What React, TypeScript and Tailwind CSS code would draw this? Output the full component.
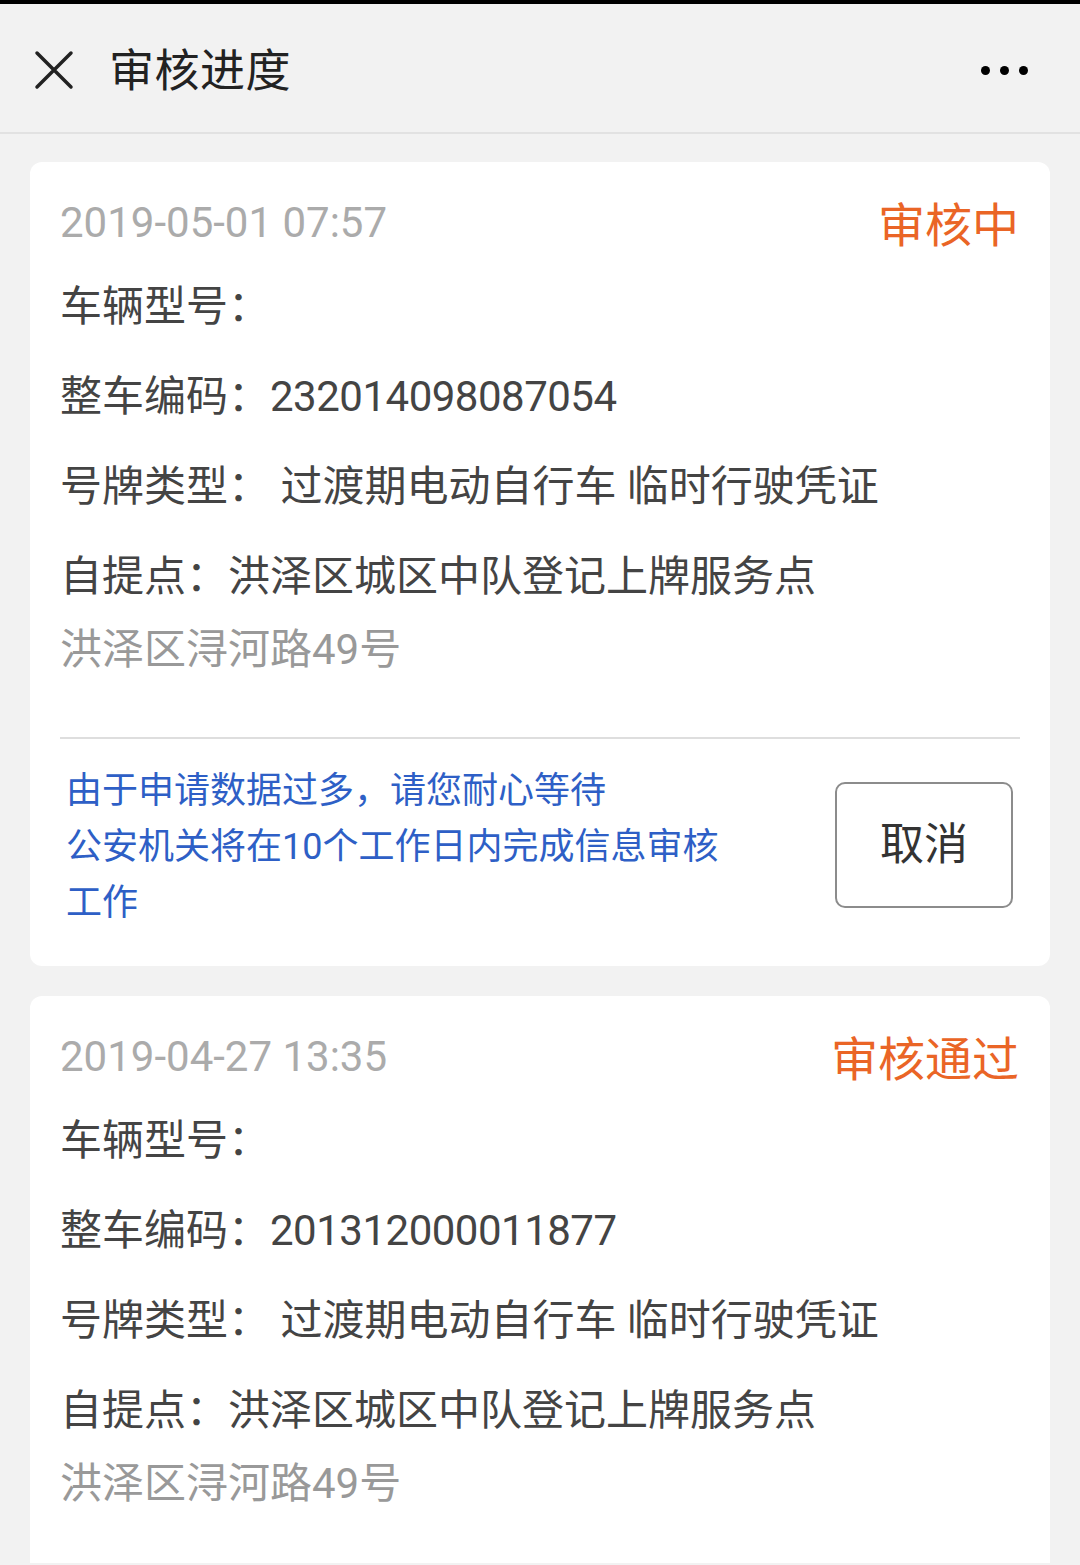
import React from 'react'

type Record = {
    time: string;
    status: string;
    model: string;
    code: string;
    plateType: string;
    pickup: string;
    address: string;
    pending: boolean;
}

const records: Record[] = [
    {
        time: "2019-05-01 07:57",
        status: "审核中",
        model: "",
        code: "232014098087054",
        plateType: "过渡期电动自行车 临时行驶凭证",
        pickup: "洪泽区城区中队登记上牌服务点",
        address: "洪泽区浔河路49号",
        pending: true,
    },
    {
        time: "2019-04-27 13:35",
        status: "审核通过",
        model: "",
        code: "201312000011877",
        plateType: "过渡期电动自行车 临时行驶凭证",
        pickup: "洪泽区城区中队登记上牌服务点",
        address: "洪泽区浔河路49号",
        pending: false,
    },
];

const RecordCard = ({ record }: { record: Record }) => {
  return (
    <div className="bg-white rounded-[12px] px-[30px] pt-[36px]">
        <div className="flex justify-between items-center h-[48px]">
            <span className="text-[42px] text-[#ababab] leading-none mt-[2px]">{record.time}</span>
            <span className="text-[47px] text-[#ea6526] leading-none mt-[6px] mr-[1px]">{record.status}</span>
        </div>
        <div className="mt-[16px] text-[42px] text-[#444] leading-[90px]">
            <div>车辆型号：{record.model}</div>
            <div>整车编码：<span className="tracking-[-0.5px]">{record.code}</span></div>
            <div>号牌类型： {record.plateType}</div>
            <div>自提点：{record.pickup}</div>
        </div>
        <div className="text-[42px] text-[#999] leading-[56px]">{record.address}</div>
        {record.pending ? (
            <>
                <div className="mt-[59px] h-[2px] bg-[#dedede]"></div>
                <div className="flex justify-between items-center pt-[24px] pb-[35px] pl-[6px] pr-[7px]">
                    <div className="w-[680px] text-[36px] leading-[56px] text-[#2e5fc6]">
                        由于申请数据过多，请您耐心等待<br />
                        公安机关将在10个工作日内完成信息审核工作
                    </div>
                    <button className="w-[178px] h-[126px] border-2 border-[#8c8c8c] rounded-[10px] text-[44px] text-[#333] mt-[-4px]">取消</button>
                </div>
            </>
        ) : (
            <div className="h-[120px]"></div>
        )}
    </div>
  )
}

const App = () => {
  return (
    <div className="min-h-[1565px] bg-[#f2f2f2] font-['Roboto','Noto_Sans_CJK_SC',sans-serif] border-t-4 border-black">
        <div className="h-[130px] flex items-center justify-between border-b-2 border-[#e2e2e2] bg-[#f2f2f2]">
            <div className="flex items-center">
                <svg className="ml-[34px] mt-[4px]" width="40" height="40" viewBox="0 0 40 40" fill="none" stroke="#222" strokeWidth="3.5" strokeLinecap="round">
                    <path d="M3 3L37 37M37 3L3 37" />
                </svg>
                <span className="ml-[35px] mt-[6px] text-[45px] tracking-[0.5px] text-[#222] leading-none">审核进度</span>
            </div>
            <div className="flex items-center gap-[10px] mr-[52px] mt-[4px]">
                <div className="w-[9px] h-[9px] rounded-full bg-black"></div>
                <div className="w-[9px] h-[9px] rounded-full bg-black"></div>
                <div className="w-[9px] h-[9px] rounded-full bg-black"></div>
            </div>
        </div>
        <div className="flex flex-col gap-[30px] px-[30px] pt-[28px] h-[1429px] overflow-hidden">
            {records.map((r, i) => <RecordCard key={i} record={r} />)}
        </div>
    </div>
  )
}

export default App
